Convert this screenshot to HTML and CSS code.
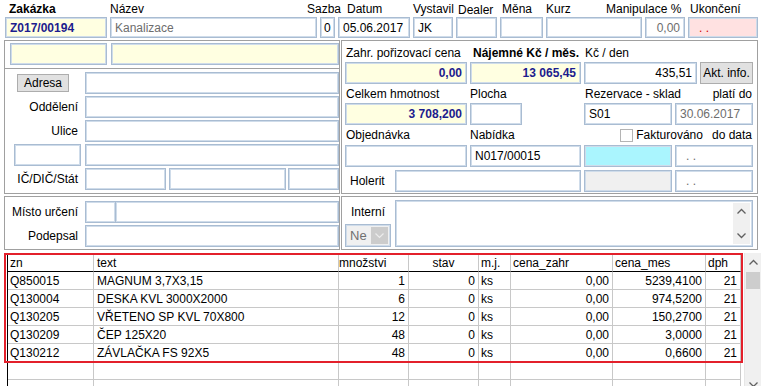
FILE: index.html
```html
<!DOCTYPE html>
<html lang="cs">
<head>
    <meta charset="utf-8">
    <title>Zakázka Z017/00194</title>
    <link rel="stylesheet" href="styles.css">
</head>
<body>

<div class="head-labels">
    <span class="b">Zakázka</span>
    <span>Název</span>
    <span>Sazba</span>
    <span>Datum</span>
    <span>Vystavil</span>
    <span class="low-lbl">Dealer</span>
    <span>Měna</span>
    <span>Kurz</span>
    <span>Manipulace %</span>
    <span>Ukončení</span>
</div>
<div class="head-fields">
    <div class="fld yellow strong">Z017/00194</div>
    <div class="fld dim">Kanalizace</div>
    <div class="fld tight">0</div>
    <div class="fld">05.06.2017</div>
    <div class="fld">JK</div>
    <div class="fld"></div>
    <div class="fld"></div>
    <div class="fld"></div>
    <div class="fld num dim">0,00</div>
    <div class="fld pink red mask">. .</div>
</div>

<div class="mid">
    <div class="left">
        <div class="box box-a">
            <div class="fld yellow w97"></div>
            <div class="fld yellow grow"></div>
        </div>
        <div class="box box-b">
            <div class="lbl-cell"><button type="button" class="btn adresa">Adresa</button></div>
            <div class="fld"></div>
            <div class="lbl-cell r">Oddělení</div>
            <div class="fld"></div>
            <div class="lbl-cell r">Ulice</div>
            <div class="fld"></div>
            <div class="lbl-cell"><div class="fld psc"></div></div>
            <div class="fld"></div>
            <div class="lbl-cell r">IČ/DIČ/Stát</div>
            <div class="ic-row">
                <div class="fld w81"></div>
                <div class="fld w117"></div>
                <div class="fld grow"></div>
            </div>
        </div>
    </div>

    <div class="box right">
        <span class="lbl">Zahr. pořizovací cena</span>
        <span class="lbl b pl3">Nájemné Kč / měs.</span>
        <span class="lbl span2">Kč / den</span>

        <div class="fld yellow num strong">0,00</div>
        <div class="fld yellow num strong">13 065,45</div>
        <div class="span2 pair">
            <div class="fld num grow">435,51</div>
            <button type="button" class="btn info">Akt. info.</button>
        </div>

        <span class="lbl">Celkem hmotnost</span>
        <span class="lbl pl0">Plocha</span>
        <span class="lbl">Rezervace - sklad</span>
        <span class="lbl end">platí do</span>

        <div class="fld yellow num strong">3 708,200</div>
        <div><div class="fld w52"></div></div>
        <div class="fld">S01</div>
        <div class="fld dim">30.06.2017</div>

        <span class="lbl">Objednávka</span>
        <span class="lbl pl0">Nabídka</span>
        <div class="lbl span2 fakt">
            <span class="chk"></span>
            <span>Fakturováno</span>
            <span class="dodata">do data</span>
        </div>

        <div class="fld"></div>
        <div class="fld">N017/00015</div>
        <div class="fld cyan"></div>
        <div class="fld dim mask">. .</div>

        <div class="span2 holerit last">
            <span class="hol-lbl">Holerit</span>
            <div class="fld grow"></div>
        </div>
        <div class="fld grey last"></div>
        <div class="fld dim mask last">. .</div>
    </div>
</div>

<div class="lower">
    <div class="box low-left">
        <div class="lbl-cell r">Místo určení</div>
        <div class="pair0">
            <div class="fld w31"></div>
            <div class="fld grow join"></div>
        </div>
        <div class="lbl-cell r">Podepsal</div>
        <div class="fld"></div>
    </div>
    <div class="box low-right">
        <div class="intern">
            <span class="intern-lbl">Interní</span>
            <div class="select">
                <span class="sel-val">Ne</span>
                <span class="sel-arrow">
                    <svg width="9" height="6" viewBox="0 0 9 6"><polyline points="0.5,0.5 4.5,4.5 8.5,0.5" fill="none" stroke="#ececec" stroke-width="1.2"/></svg>
                </span>
            </div>
        </div>
        <div class="memo">
            <div class="memo-text"></div>
            <div class="memo-bar">
                <svg width="9" height="6" viewBox="0 0 9 6"><polyline points="0.5,5.5 4.5,1.5 8.5,5.5" fill="none" stroke="#606060" stroke-width="1.3"/></svg>
                <svg width="9" height="6" viewBox="0 0 9 6"><polyline points="0.5,0.5 4.5,4.5 8.5,0.5" fill="none" stroke="#606060" stroke-width="1.3"/></svg>
            </div>
        </div>
    </div>
</div>

<div class="list">
    <div class="sheet">
        <div class="hl">
            <div class="row head">
                <div>zn</div><div class="pl3">text</div><div class="pl0">množstvi</div><div class="c">stav</div><div>m.j.</div><div>cena_zahr</div><div>cena_mes</div><div>dph</div>
            </div>
            <div class="row">
                <div>Q850015</div><div class="pl3">MAGNUM 3,7X3,15</div><div class="n">1</div><div class="n">0</div><div>ks</div><div class="n">0,00</div><div class="n">5239,4100</div><div class="n">21</div>
            </div>
            <div class="row">
                <div>Q130004</div><div class="pl3">DESKA KVL 3000X2000</div><div class="n">6</div><div class="n">0</div><div>ks</div><div class="n">0,00</div><div class="n">974,5200</div><div class="n">21</div>
            </div>
            <div class="row">
                <div>Q130205</div><div class="pl3">VŘETENO SP KVL 70X800</div><div class="n">12</div><div class="n">0</div><div>ks</div><div class="n">0,00</div><div class="n">150,2700</div><div class="n">21</div>
            </div>
            <div class="row">
                <div>Q130209</div><div class="pl3">ČEP 125X20</div><div class="n">48</div><div class="n">0</div><div>ks</div><div class="n">0,00</div><div class="n">3,0000</div><div class="n">21</div>
            </div>
            <div class="row">
                <div>Q130212</div><div class="pl3">ZÁVLAČKA FS 92X5</div><div class="n">48</div><div class="n">0</div><div>ks</div><div class="n">0,00</div><div class="n">0,6600</div><div class="n">21</div>
            </div>
        </div>
        <div class="row"><div></div><div></div><div></div><div></div><div></div><div></div><div></div><div></div></div>
        <div class="row"><div></div><div></div><div></div><div></div><div></div><div></div><div></div><div></div></div>
    </div>
    <div class="vscroll">
        <span class="arr up"><svg width="9" height="6" viewBox="0 0 9 6"><polyline points="0.5,5.5 4.5,1.5 8.5,5.5" fill="none" stroke="#606060" stroke-width="1.3"/></svg></span>
        <span class="thumb"></span>
        <span class="arr down"><svg width="9" height="6" viewBox="0 0 9 6"><polyline points="0.5,0.5 4.5,4.5 8.5,0.5" fill="none" stroke="#606060" stroke-width="1.3"/></svg></span>
    </div>
</div>

</body>
</html>
```

FILE: styles.css
```css
* { box-sizing: border-box; }

body {
    margin: 0;
    width: 766px;
    height: 386px;
    overflow: hidden;
    background: #fff;
    font: 12px/14px "Liberation Sans", Arial, sans-serif;
    color: #000;
}

button { font: inherit; color: #000; }

/* edit fields */
.fld {
    height: 22px;
    border: 1px solid #a9bcd2;
    box-shadow: inset 0 0 0 1px #cfdcea;
    background: #fff;
    padding: 0 4px;
    display: flex;
    align-items: center;
    white-space: nowrap;
    overflow: hidden;
}
.fld.num { justify-content: flex-end; }
.fld.tight { padding: 0 3px; }
.yellow { background: #ffffe1; }
.pink { background: #ffe1e1; }
.cyan { background: #aaf5fe; }
.grey { background: #f0f0f0; }
.strong { font-weight: bold; color: #1c1c8e; }
.dim { color: #6d6d6d; }
.red { color: #d40000; }
.mask { padding-left: 10px; }
.grow { flex: 1; }
.b { font-weight: bold; }

.w97 { width: 97px; }
.w81 { width: 81px; }
.w117 { width: 117px; }
.w52 { width: 52px; }
.w31 { width: 31px; }

.btn {
    background: #e1e1e1;
    border: 1px solid #adadad;
    padding: 0;
}

/* header */
.head-labels {
    display: grid;
    grid-template-columns: 101px 197px 40px 66px 45px 44px 44px 60px 84px 1fr;
    height: 17px;
    padding-left: 9px;
    align-items: center;
    white-space: nowrap;
}
.low-lbl { padding-top: 3px; }

.head-fields {
    display: grid;
    grid-template-columns: 102px 207px 15px 72px 40px 41px 43px 96px 40px 70px;
    column-gap: 3px;
    padding-left: 5px;
}
.head-fields .fld { height: 21px; }

/* panels */
.box { border: 1px solid #a0a0a0; }

.mid {
    display: flex;
    gap: 1px;
    margin: 2px 0 0 4px;
}
.left {
    width: 336px;
    display: flex;
    flex-direction: column;
}
.box-a {
    height: 29px;
    display: flex;
    align-items: flex-start;
    gap: 4px;
    padding: 2px 0 0 5px;
}
.box-b {
    border-top: none;
    display: grid;
    grid-template-columns: 80px 1fr;
    grid-auto-rows: 22px;
    row-gap: 2px;
    padding: 3px 0 3px 0;
}
.lbl-cell {
    display: flex;
    align-items: center;
    white-space: nowrap;
}
.lbl-cell.r {
    justify-content: flex-end;
    padding-right: 7px;
}
.adresa {
    width: 52px;
    height: 18px;
    margin-left: 12px;
}
.psc {
    width: 67px;
    margin-left: 9px;
}
.ic-row {
    display: flex;
    gap: 3px;
}
.ic-row .grow { margin-left: -1px; }

.right {
    width: 417px;
    display: grid;
    grid-template-columns: 122px 111px 88px 78px;
    grid-template-rows: 19px 22px 19px 22px 20px 22px 25px;
    column-gap: 3px;
    padding: 2px 0 1px 3px;
}
.lbl {
    display: flex;
    align-items: center;
    padding-left: 1px;
    white-space: nowrap;
}
.lbl.pl3 { padding-left: 3px; }
.lbl.pl0 { padding-left: 0; }
.lbl.end { justify-content: flex-end; padding-right: 1px; }
.span2 { grid-column: span 2; }
.pair {
    display: flex;
    gap: 3px;
}
.info {
    width: 53px;
    height: 22px;
}
.fakt {
    justify-content: flex-end;
    padding-right: 1px;
}
.chk {
    width: 13px;
    height: 13px;
    border: 1px solid #b4b4b4;
    background: #fff;
    margin-right: 3px;
}
.dodata { margin-left: 9px; }
.last { margin-top: 3px; }
.holerit {
    display: flex;
    align-items: center;
}
.hol-lbl {
    width: 50px;
    padding-left: 5px;
}

/* lower panels */
.lower {
    display: flex;
    gap: 1px;
    margin: 2px 0 0 4px;
}
.low-left {
    width: 336px;
    height: 54px;
    display: grid;
    grid-template-columns: 80px 1fr;
    grid-auto-rows: 22px;
    row-gap: 2px;
    padding: 4px 0 0 0;
}
.pair0 { display: flex; }
.join { margin-left: -1px; }

.low-right {
    width: 417px;
    height: 54px;
    display: flex;
    gap: 4px;
    padding: 3px 4px 0 3px;
}
.intern {
    width: 46px;
    display: flex;
    flex-direction: column;
}
.intern-lbl {
    height: 24px;
    display: flex;
    align-items: center;
    justify-content: center;
}
.select {
    height: 23px;
    display: flex;
    border: 1px solid #a9bcd2;
    box-shadow: inset 0 0 0 1px #cfdcea;
    background: #f0f0f0;
    padding: 2px;
}
.sel-val {
    flex: 1;
    color: #707070;
    padding-left: 2px;
    display: flex;
    align-items: center;
    font-size: 13px;
}
.sel-arrow {
    width: 17px;
    background: #cccccc;
    display: flex;
    align-items: center;
    justify-content: center;
}
.memo {
    flex: 1;
    height: 47px;
    display: flex;
    border: 1px solid #a9bcd2;
    box-shadow: inset 0 0 0 1px #cfdcea;
    padding: 2px;
}
.memo-text { flex: 1; background: #fff; }
.memo-bar {
    width: 17px;
    background: #f0f0f0;
    display: flex;
    flex-direction: column;
    align-items: center;
    justify-content: space-between;
    padding: 5px 0 5px;
}

/* item grid */
.list {
    display: flex;
    margin: 3px 0 0 7px;
}
.sheet {
    width: 736px;
    border-left: 1px solid #000;
}
.hl { position: relative; }
.hl::after {
    content: "";
    position: absolute;
    top: 0;
    left: -4px;
    right: 0;
    bottom: -1px;
    border: 2px solid #e3202b;
    pointer-events: none;
}
.row {
    display: grid;
    grid-template-columns: 86px 245px 70px 70px 32px 102px 93px 35px;
    height: 18px;
}
.row > div {
    border-right: 1px solid #c8c8c8;
    border-bottom: 1px solid #c8c8c8;
    padding: 0 2px;
    display: flex;
    align-items: center;
    white-space: nowrap;
    overflow: hidden;
}
.row > div.pl3 { padding-left: 3px; }
.row > div.pl0 { padding-left: 0; }
.row > div.n { justify-content: flex-end; padding-right: 3px; }
.row > div.c { justify-content: center; }
.row.head { height: 19px; padding-top: 1px; }
.row.head > div { border-bottom-color: #000; }

.vscroll {
    width: 17px;
    height: 140px;
    margin-left: 1px;
    background: #f0f0f0;
    border-left: 1px solid #e6e6e6;
    display: flex;
    flex-direction: column;
    align-items: center;
}
.arr {
    height: 17px;
    display: flex;
    align-items: center;
    justify-content: center;
}
.thumb {
    width: 14px;
    height: 17px;
    background: #cdcdcd;
    margin-top: 2px;
}
.down { margin-top: 87px; }
```
